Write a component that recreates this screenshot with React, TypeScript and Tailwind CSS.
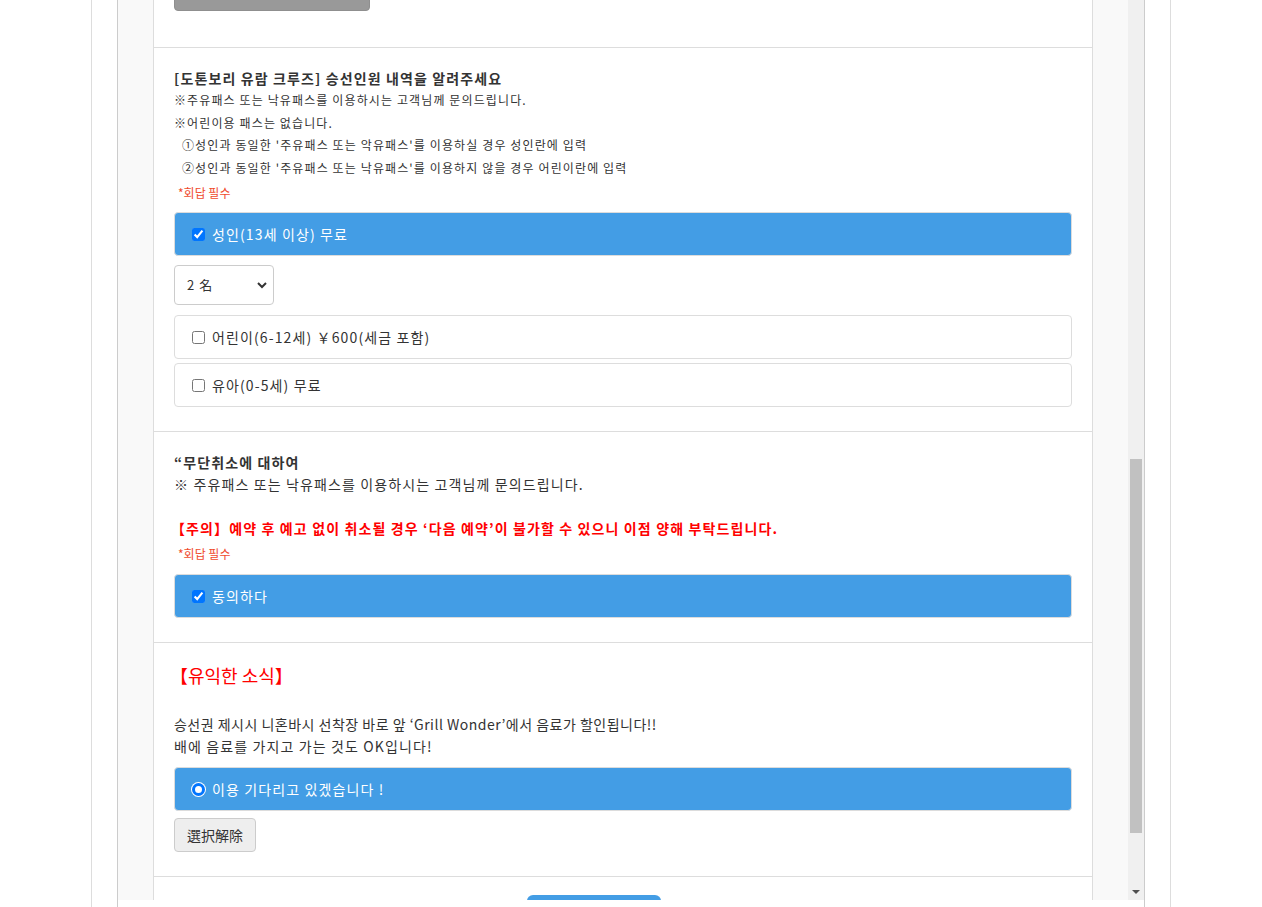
import React from 'react';

const Required = () => (
  <p className="pl-1 text-[12px] leading-[18px] text-[#ef4b2d]">*회답 필수</p>
);

const BlueOption = ({ kind, label, className = '' }: { kind: 'check' | 'radio'; label: string; className?: string }) => (
  <label className={`flex h-[44px] items-center gap-[7px] rounded border border-[#dcdcdc] bg-[#439de5] pl-[17px] text-[14px] text-white ${className}`}>
    {kind === 'check' ? (
      <input type="checkbox" defaultChecked className="m-0 h-[13px] w-[13px]" />
    ) : (
      <span className="h-[13px] w-[13px] rounded-full border-[3px] border-[#0075ff] bg-white ring-1 ring-white" />
    )}
    {label}
  </label>
);

const PlainOption = ({ label, className = '' }: { label: string; className?: string }) => (
  <label className={`flex h-[44px] items-center gap-[7px] rounded border border-[#dddddd] bg-white pl-[17px] text-[14px] text-[#333] ${className}`}>
    <input type="checkbox" className="m-0 h-[13px] w-[13px]" />
    {label}
  </label>
);

export default function App() {
  return (
    <div className="h-[907px] overflow-hidden bg-white font-['Noto_Sans_CJK_KR','Liberation_Sans',sans-serif] text-[#333]">
      <div className="mx-auto flex h-full w-[1080px] border-x border-[#dddddd] px-[25px]">
        <div className="flex h-full w-full flex-col border-x border-[#cccccc]">
          <div className="flex h-[900px] overflow-hidden">
            <div className="flex-1 overflow-hidden bg-[#f9f9f9]">
              <div className="mx-auto w-[940px] border-x border-[#dddddd] bg-white tracking-[0.07em]">
                {/* previous question, scrolled off */}
                <section className="border-b border-[#dddddd] px-5 pb-[36px]">
                  <div className="-mt-[29px] h-[40px] w-[196px] rounded border border-[#8f8f8f] bg-[#999999]" />
                </section>

                <section className="border-b border-[#dddddd] px-5 pt-[19px] pb-[24px]">
                  <h3 className="text-[14px] font-bold leading-[22px]">[도톤보리 유람 크루즈] 승선인원 내역을 알려주세요</h3>
                  <div className="text-[12px] leading-[22.5px]">
                    <p>※주유패스 또는 낙유패스를 이용하시는 고객님께 문의드립니다.</p>
                    <p>※어린이용 패스는 없습니다.</p>
                    <p className="pl-2">①성인과 동일한 '주유패스 또는 악유패스'를 이용하실 경우 성인란에 입력</p>
                    <p className="pl-2">②성인과 동일한 '주유패스 또는 낙유패스'를 이용하지 않을 경우 어린이란에 입력</p>
                  </div>
                  <div className="mt-[5px] tracking-normal">
                    <Required />
                  </div>
                  <BlueOption kind="check" label="성인(13세 이상) 무료" className="mt-[10px]" />
                  <div className="relative mt-[9px] h-[40px] w-[100px]">
                    <select
                      defaultValue="2"
                      className="h-full w-full appearance-none rounded border border-[#cccccc] bg-white pl-[12px] text-[13px] text-[#333] outline-none"
                    >
                      <option value="1">1 名</option>
                      <option value="2">2 名</option>
                      <option value="3">3 名</option>
                    </select>
                    <svg className="pointer-events-none absolute right-[7px] top-[17px]" width="10" height="7" viewBox="0 0 10 7">
                      <polyline points="1,1 5,5 9,1" fill="none" stroke="#333" strokeWidth="2" />
                    </svg>
                  </div>
                  <PlainOption label="어린이(6-12세) ￥600(세금 포함)" className="mt-[10px]" />
                  <PlainOption label="유아(0-5세) 무료" className="mt-[4px]" />
                </section>

                <section className="border-b border-[#dddddd] px-5 pt-[19px] pb-[24px]">
                  <h3 className="text-[14px] font-bold leading-[22px]">“무단취소에 대하여</h3>
                  <p className="text-[14px] leading-[22px]">※ 주유패스 또는 낙유패스를 이용하시는 고객님께 문의드립니다.</p>
                  <p className="h-[22px]" />
                  <p className="-ml-[3px] text-[14px] font-bold leading-[22px] text-[#ff0000]">
                    【주의】예약 후 예고 없이 취소될 경우 ‘다음 예약’이 불가할 수 있으니 이점 양해 부탁드립니다.
                  </p>
                  <div className="mt-[6px] tracking-normal">
                    <Required />
                  </div>
                  <BlueOption kind="check" label="동의하다" className="mt-[11px]" />
                </section>

                <section className="border-b border-[#dddddd] px-5 pt-[19px] pb-[24px]">
                  <h3 className="-ml-[4px] text-[18px] leading-[26px] tracking-normal text-[#ff0000]">【유익한 소식】</h3>
                  <div className="mt-[25px] text-[14px] leading-[22px]">
                    <p className="tracking-[0.035em]">승선권 제시시 니혼바시 선착장 바로 앞 ‘Grill Wonder’에서 음료가 할인됩니다!!</p>
                    <p>배에 음료를 가지고 가는 것도 OK입니다!</p>
                  </div>
                  <BlueOption kind="radio" label="이용 기다리고 있겠습니다 !" className="mt-[10px]" />
                  <button className="mt-[7px] h-[34px] rounded border border-[#cccccc] bg-[#eeeeee] px-3 text-[14px] tracking-normal text-[#333]">
                    選択解除
                  </button>
                </section>

                <section className="px-5 pt-[18px]">
                  <div className="ml-[353px] h-[40px] w-[134px] rounded-md bg-[#439de5]" />
                </section>
              </div>
            </div>

            {/* scrollbar */}
            <div className="flex w-4 flex-col bg-[#f0f0f0]">
              <div className="h-[459px]" />
              <div className="mx-[2px] h-[374px] bg-[#c1c1c1]" />
              <div className="flex-1" />
              <div className="flex h-[17px] items-center justify-center">
                <svg width="8" height="4" viewBox="0 0 8 4">
                  <polygon points="0,0 8,0 4,4" fill="#505050" />
                </svg>
              </div>
            </div>
          </div>
        </div>
      </div>
    </div>
  );
}
